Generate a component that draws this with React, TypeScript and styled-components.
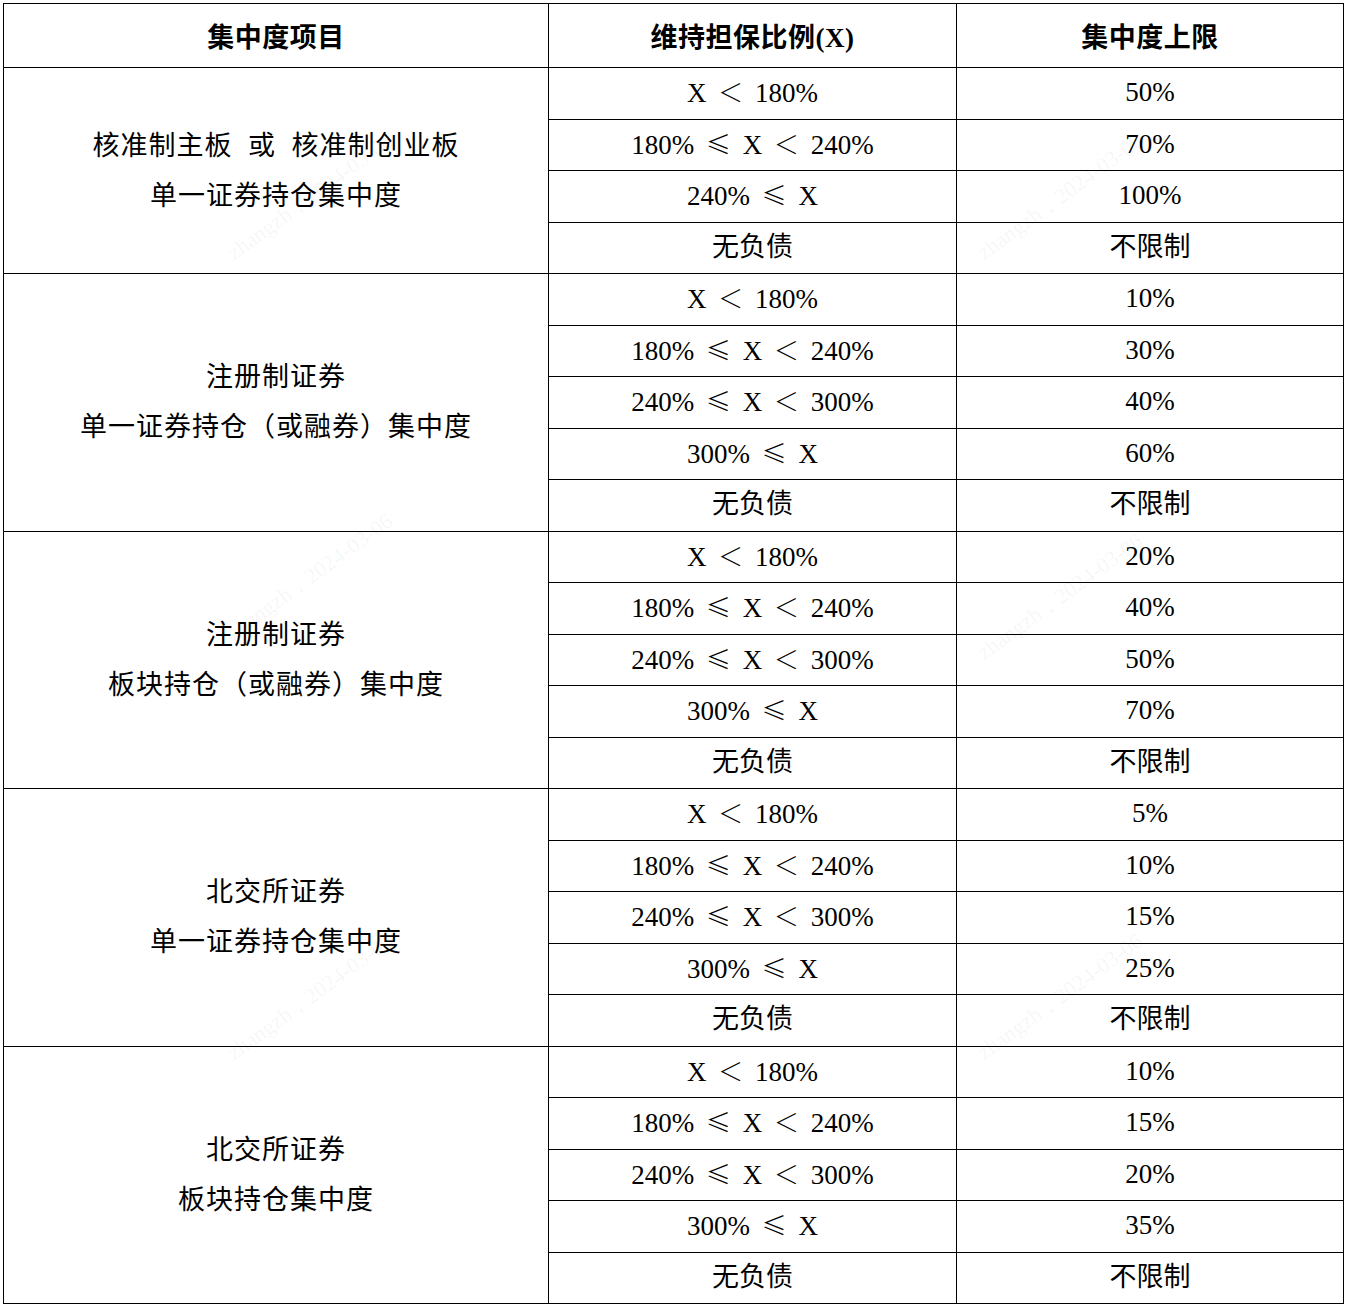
import React from 'react';
import styled, { createGlobalStyle } from 'styled-components';

const Global = createGlobalStyle`
    html, body {
        margin: 0;
        padding: 0;
        background: #fff;
    }
    body {
        font-family: "Liberation Serif", "Noto Sans CJK SC", serif;
        color: #000;
    }
`;

const Side = styled.div`
    position: relative;
    padding: 3px 0 0 3px;
    width: 1340px;
`;

const Tabell = styled.table`
    border-collapse: collapse;
    table-layout: fixed;
    width: 1340px;
`;

const Kolonne = styled.col<{ $w: number }>`
    width: ${(p) => p.$w}px;
`;

const Hode = styled.th`
    height: 63px;
    border: 1px solid #000;
    font-size: 27px;
    font-weight: 700;
    text-align: center;
    vertical-align: middle;
    padding: 0;
    letter-spacing: 0.5px;
`;

const Rad = styled.tr`
    height: 51.5px;
`;

const Gruppe = styled.td`
    border: 1px solid #000;
    font-size: 27px;
    line-height: 50px;
    text-align: center;
    vertical-align: middle;
    padding: 0;
    white-space: pre;
    letter-spacing: 1px;
`;

const Celle = styled.td`
    border: 1px solid #000;
    font-size: 27px;
    line-height: 30px;
    text-align: center;
    vertical-align: middle;
    padding: 0 0 2px;
    white-space: pre;
`;

const Tegn = styled.span`
    font-family: "Noto Sans CJK SC", sans-serif;
    font-size: 25px;
    font-weight: 300;
    margin: 0 5px;
`;

const Vannmerke = styled.div<{ $x: number; $y: number }>`
    position: absolute;
    left: ${(p) => p.$x}px;
    top: ${(p) => p.$y}px;
    transform: rotate(-36deg);
    transform-origin: left center;
    font-family: "Liberation Serif", serif;
    font-size: 22px;
    color: rgba(0, 0, 0, 0.05);
    white-space: nowrap;
    pointer-events: none;
`;

type Gr = { navn: string[]; rader: [string, string][] };

const grupper: Gr[] = [
    {
        navn: ['核准制主板  或  核准制创业板', '单一证券持仓集中度'],
        rader: [
            ['X ＜ 180%', '50%'],
            ['180% ≤ X ＜ 240%', '70%'],
            ['240% ≤ X', '100%'],
            ['无负债', '不限制'],
        ],
    },
    {
        navn: ['注册制证券', '单一证券持仓（或融券）集中度'],
        rader: [
            ['X ＜ 180%', '10%'],
            ['180% ≤ X ＜ 240%', '30%'],
            ['240% ≤ X ＜ 300%', '40%'],
            ['300% ≤ X', '60%'],
            ['无负债', '不限制'],
        ],
    },
    {
        navn: ['注册制证券', '板块持仓（或融券）集中度'],
        rader: [
            ['X ＜ 180%', '20%'],
            ['180% ≤ X ＜ 240%', '40%'],
            ['240% ≤ X ＜ 300%', '50%'],
            ['300% ≤ X', '70%'],
            ['无负债', '不限制'],
        ],
    },
    {
        navn: ['北交所证券', '单一证券持仓集中度'],
        rader: [
            ['X ＜ 180%', '5%'],
            ['180% ≤ X ＜ 240%', '10%'],
            ['240% ≤ X ＜ 300%', '15%'],
            ['300% ≤ X', '25%'],
            ['无负债', '不限制'],
        ],
    },
    {
        navn: ['北交所证券', '板块持仓集中度'],
        rader: [
            ['X ＜ 180%', '10%'],
            ['180% ≤ X ＜ 240%', '15%'],
            ['240% ≤ X ＜ 300%', '20%'],
            ['300% ≤ X', '35%'],
            ['无负债', '不限制'],
        ],
    },
];

const merker = [
    [230, 240], [980, 240], [230, 620], [980, 640], [230, 1040], [980, 1040],
];

// wraps ≤ and ＜ in the CJK font so they come out full width
function Formel({ tekst }: { tekst: string }) {
    const deler = tekst.split(/([≤＜])/);
    return (
        <>
            {deler.map((d, i) =>
                d === '≤' || d === '＜' ? <Tegn key={i}>{d}</Tegn> : <React.Fragment key={i}>{d}</React.Fragment>
            )}
        </>
    );
}

export default function App() {
    return (
        <Side>
            <Global />
            <Tabell>
                <colgroup>
                    <Kolonne $w={545} />
                    <Kolonne $w={408} />
                    <Kolonne $w={387} />
                </colgroup>
                <thead>
                    <tr>
                        <Hode>集中度项目</Hode>
                        <Hode>维持担保比例(X)</Hode>
                        <Hode>集中度上限</Hode>
                    </tr>
                </thead>
                <tbody>
                    {grupper.map((g, gi) =>
                        g.rader.map((r, ri) => (
                            <Rad key={gi + '-' + ri}>
                                {ri === 0 && (
                                    <Gruppe rowSpan={g.rader.length}>
                                        {g.navn[0]}
                                        <br />
                                        {g.navn[1]}
                                    </Gruppe>
                                )}
                                <Celle>
                                    <Formel tekst={r[0]} />
                                </Celle>
                                <Celle>{r[1]}</Celle>
                            </Rad>
                        ))
                    )}
                </tbody>
            </Tabell>
            {merker.map(([x, y], i) => (
                <Vannmerke key={i} $x={x} $y={y}>
                    zhangzh，2024-03-06
                </Vannmerke>
            ))}
        </Side>
    );
}
